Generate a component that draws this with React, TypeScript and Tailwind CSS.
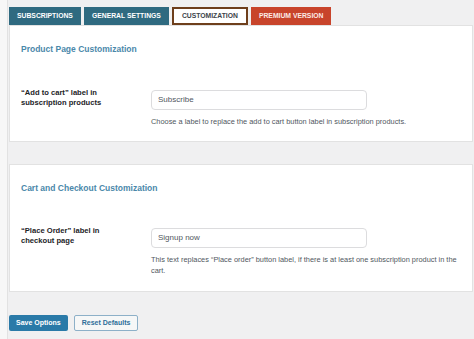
import React from 'react';

const font = { fontFamily: '"Liberation Sans", Arial, sans-serif' };

function Tab({ label, variant }: { label: string; variant: 'teal' | 'active' | 'premium' }) {
  const cls =
    variant === 'teal'
      ? 'bg-[#2f6a80] text-white'
      : variant === 'premium'
        ? 'bg-[#c8442b] text-[#fbeae6]'
        : 'bg-white text-[#3c434a] border-2 border-[#6e3f1c]';
  return (
    <div className={`h-[18px] px-[8px] flex items-center text-[6.8px] font-bold uppercase ${cls}`}>
      {label}
    </div>
  );
}

function Field({
  label,
  value,
  help,
}: {
  label: React.ReactNode;
  value: string;
  help: string;
}) {
  return (
    <div className="flex items-start">
      <div className="w-[130px] text-[7.6px] leading-[10px] font-bold text-[#1d2327]">{label}</div>
      <div className="flex-1 pt-[2px]">
        <div className="w-[216px] h-[20px] rounded-[4px] border border-[#dcdcde] bg-white flex items-center px-[6px] text-[8px] text-[#50575e]">
          {value}
        </div>
        <p className="mt-[6px] text-[7.4px] leading-[11px] text-[#50575e]">{help}</p>
      </div>
    </div>
  );
}

export default function App() {
  return (
    <div className="w-[474px] h-[339px] bg-[#f0f0f1] flex overflow-hidden" style={font}>
      <div className="w-[8px] bg-[#f7f7f7] border-r border-[#e2e2e2]" />
      <div className="flex-1 pl-[1px] pr-[1px]">
        <div className="flex gap-[3px] pt-[7px]">
          <Tab label="Subscriptions" variant="teal" />
          <Tab label="General Settings" variant="teal" />
          <Tab label="Customization" variant="active" />
          <Tab label="Premium Version" variant="premium" />
        </div>

        <section className="bg-white border border-[#e2e2e2] h-[117px] pl-[11px] pr-[11px] pt-[16px]">
          <h2 className="text-[8.5px] leading-[14px] font-bold text-[#4a88aa]">Product Page Customization</h2>
          <div className="mt-[32px]">
            <Field
              label={
                <>
                  “Add to cart” label in
                  <br />
                  subscription products
                </>
              }
              value="Subscribe"
              help="Choose a label to replace the add to cart button label in subscription products."
            />
          </div>
        </section>

        <section className="mt-[22px] bg-white border border-[#e2e2e2] h-[128px] pl-[11px] pr-[11px] pt-[16px]">
          <h2 className="text-[8.5px] leading-[14px] font-bold text-[#4a88aa]">Cart and Checkout Customization</h2>
          <div className="mt-[31px]">
            <Field
              label={
                <>
                  “Place Order” label in
                  <br />
                  checkout page
                </>
              }
              value="Signup now"
              help="This text replaces “Place order” button label, if there is at least one subscription product in the cart."
            />
          </div>
        </section>

        <div className="flex gap-[6px] mt-[23px]">
          <button className="h-[16px] px-[7px] rounded-[2px] bg-[#2a7aa8] text-white text-[7px] font-bold">
            Save Options
          </button>
          <button className="h-[16px] px-[7px] rounded-[2px] bg-[#f6f7f7] border border-[#8db0c8] text-[#2f6f9a] text-[7px] font-bold">
            Reset Defaults
          </button>
        </div>
      </div>
    </div>
  );
}
